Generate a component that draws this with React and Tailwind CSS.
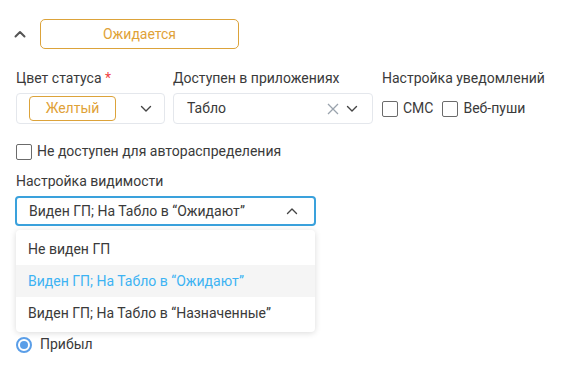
import React from 'react'

const font = { fontFamily: 'Roboto, "Noto Sans", sans-serif' }

function ChevronDown({ className }) {
  return (
    <svg className={className} width="12" height="8" viewBox="0 0 12 8" fill="none">
      <path d="M1.5 1.5 L6 6 L10.5 1.5" stroke="currentColor" strokeWidth="1.4" strokeLinecap="round" strokeLinejoin="round" />
    </svg>
  )
}

function ChevronUp({ className, strokeWidth = 1.4 }) {
  return (
    <svg className={className} width="12" height="8" viewBox="0 0 12 8" fill="none">
      <path d="M1.5 6.5 L6 2 L10.5 6.5" stroke="currentColor" strokeWidth={strokeWidth} strokeLinecap="round" strokeLinejoin="round" />
    </svg>
  )
}

function Checkbox({ label }) {
  return (
    <label className="flex items-center gap-[5px]">
      <span className="w-4 h-4 rounded-[2px] border-[1.5px] border-[#6b6b6b] bg-white" />
      <span>{label}</span>
    </label>
  )
}

export default function App() {
  const options = [
    'Не виден ГП',
    'Виден ГП; На Табло в “Ожидают”',
    'Виден ГП; На Табло в “Назначенные”',
  ]

  return (
    <div className="w-[571px] h-[371px] bg-white text-[14px] text-[#3a3a3a] overflow-hidden" style={font}>
      <div className="pl-4 pt-[19px]">
        <div className="flex items-center">
          <ChevronUp className="text-[#555] -ml-[2px] w-[12px]" strokeWidth={2} />
          <button className="ml-[14px] w-[199px] h-[30px] rounded-[5px] border border-[#dca33a] text-[#dfa238] text-[14px]">
            Ожидается
          </button>
        </div>

        <div className="flex mt-[19px]">
          <div className="w-[149px]">
            <div className="leading-[20px]">
              Цвет статуса <span className="text-[#ef4444]">*</span>
            </div>
            <div className="mt-[5px] h-[31px] rounded-[4px] border border-[#e4e7ec] flex items-center pl-3 pr-3">
              <span className="w-[87px] h-[25px] rounded-[4px] border border-[#dca33a] text-[#dfa238] flex items-center justify-center">
                Желтый
              </span>
              <ChevronDown className="ml-auto text-[#444]" />
            </div>
          </div>

          <div className="w-[200px] ml-[8px]">
            <div className="leading-[20px]">Доступен в приложениях</div>
            <div className="mt-[5px] h-[31px] rounded-[4px] border border-[#e4e7ec] flex items-center pl-[13px] pr-[14px]">
              <span>Табло</span>
              <svg className="ml-auto text-[#9aa3ad]" width="12" height="12" viewBox="0 0 12 12">
                <path d="M1 1 L11 11 M11 1 L1 11" stroke="currentColor" strokeWidth="1.3" />
              </svg>
              <ChevronDown className="ml-[7px] text-[#444]" />
            </div>
          </div>

          <div className="ml-[9px]">
            <div className="leading-[20px]">Настройка уведомлений</div>
            <div className="mt-[5px] h-[31px] flex items-center gap-[9px]">
              <Checkbox label="СМС" />
              <Checkbox label="Веб-пуши" />
            </div>
          </div>
        </div>

        <div className="mt-[17px]">
          <Checkbox label="Не доступен для автораспределения" />
        </div>

        <div className="mt-[9px] leading-[20px]">Настройка видимости</div>

        <div className="relative w-[300px] mt-[5px]">
          <div className="h-[30px] rounded-[4px] border-2 border-[#3aa1dc] flex items-center pl-3 pr-4 -ml-[1px]">
            <span>Виден ГП; На Табло в “Ожидают”</span>
            <ChevronUp className="ml-auto text-[#444]" />
          </div>

          <div className="mt-[4px] w-[299px] bg-white rounded-[4px] shadow-[0_1px_6px_rgba(0,0,0,0.15)] py-[3px]">
            {options.map((o, i) => (
              <div
                key={o}
                className={
                  i === 1
                    ? 'h-[32px] flex items-center pl-3 bg-[#f5f5f5] text-[#3db3f3]'
                    : 'h-[32px] flex items-center pl-3'
                }
              >
                {o}
              </div>
            ))}
          </div>

          <div className="mt-[2px] flex items-center gap-[8px]">
            <span className="w-4 h-4 rounded-full border-2 border-[#5a9ee8] flex items-center justify-center">
              <span className="w-[8px] h-[8px] rounded-full bg-[#5a9ee8]" />
            </span>
            <span>Прибыл</span>
          </div>
        </div>
      </div>
    </div>
  )
}
